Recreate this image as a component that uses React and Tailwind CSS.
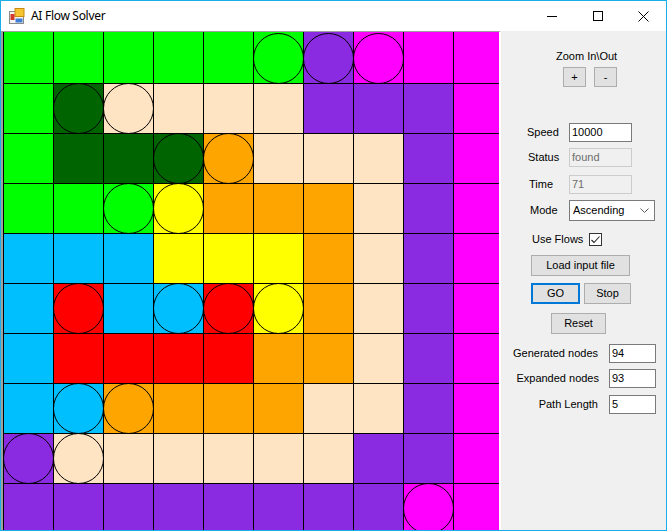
const COLORS = {
  G: 'bg-[#00ff00]',
  D: 'bg-[#006400]',
  B: 'bg-[#ffe4c4]',
  O: 'bg-[#ffa500]',
  Y: 'bg-[#ffff00]',
  C: 'bg-[#00bfff]',
  R: 'bg-[#ff0000]',
  P: 'bg-[#8a2be2]',
  M: 'bg-[#ff00ff]',
};

// lowercase letter = cell holds a flow endpoint (circle)
const BOARD = [
  'GGGGGgpmMM',
  'GdbBBBPPPM',
  'GDDdoBBBPM',
  'GGgyOOOBPM',
  'CCCYYYOBPM',
  'CrCcryOBPM',
  'CRRRROOBPM',
  'CcoOOOBBPM',
  'pbBBBBBPPM',
  'PPPPPPPPmM',
];

function Cell({ code, first }) {
  const color = COLORS[code.toUpperCase()];
  const dot = code !== code.toUpperCase();
  return (
    <div
      className={`relative w-[50px] shrink-0 border-l border-black ${color} ${
        first ? 'h-[51px]' : 'h-[50px] border-t'
      }`}
    >
      {dot && (
        <div
          className={`absolute left-[-1px] w-[51px] h-[51px] rounded-full border border-black ${
            first ? 'top-[1px]' : 'top-[-1px]'
          }`}
        />
      )}
    </div>
  );
}

function Board() {
  return (
    <div className="w-[500px] h-full shrink-0 overflow-hidden border-l-2 border-l-[#a0a0a0] border-t border-t-[#a0a0a0] border-r-2 border-r-white">
      {BOARD.map((row, r) => (
        <div key={r} className="flex">
          {row.split('').map((c, i) => (
            <Cell key={i} code={c} first={r === 0} />
          ))}
        </div>
      ))}
    </div>
  );
}

function Btn({ children, className = '' }) {
  return (
    <div
      className={`flex items-center justify-center bg-[#e1e1e1] border border-[#adadad] ${className}`}
    >
      {children}
    </div>
  );
}

function Field({ value, disabled, className = '' }) {
  return (
    <div
      className={`h-[19px] flex items-center pl-[2px] border ${
        disabled
          ? 'bg-[#f0f0f0] border-[#cccccc] text-[#6d6d6d]'
          : 'bg-white border-[#7a7a7a] text-black'
      } ${className}`}
    >
      {value}
    </div>
  );
}

function Controls() {
  return (
    <div className="flex-1 bg-[#f0f0f0] flex flex-col text-[11px] leading-[13px] text-black font-['Liberation_Sans',Arial,sans-serif]">
      <div className="mt-[19px] ml-[55px]">Zoom In\Out</div>
      <div className="mt-[4px] flex">
        <Btn className="ml-[62px] w-[23px] h-[20px]">+</Btn>
        <Btn className="ml-[8px] w-[23px] h-[20px]">-</Btn>
      </div>

      <div className="mt-[36px] flex items-center">
        <span className="ml-[26px] w-[42px]">Speed</span>
        <Field value="10000" className="w-[63px]" />
      </div>
      <div className="mt-[6px] flex items-center">
        <span className="ml-[27px] w-[41px]">Status</span>
        <Field value="found" disabled className="w-[63px]" />
      </div>
      <div className="mt-[8px] flex items-center">
        <span className="ml-[28px] w-[40px]">Time</span>
        <Field value="71" disabled className="w-[63px]" />
      </div>
      <div className="mt-[6px] flex items-center">
        <span className="ml-[29px] w-[39px]">Mode</span>
        <div className="w-[86px] h-[21px] bg-white border border-[#7a7a7a] flex items-center justify-between pl-[3px] pr-[5px]">
          <span>Ascending</span>
          <svg width="9" height="5" viewBox="0 0 9 5">
            <polyline points="0.5,0.5 4.5,4.5 8.5,0.5" fill="none" stroke="#606060" strokeWidth="1" />
          </svg>
        </div>
      </div>
      <div className="mt-[12px] flex items-center h-[13px]">
        <span className="ml-[31px] w-[57px]">Use Flows</span>
        <div className="w-[13px] h-[13px] bg-white border border-[#333333] flex items-center justify-center">
          <svg width="9" height="8" viewBox="0 0 9 8">
            <polyline points="0.5,4 3,6.5 8.5,0.5" fill="none" stroke="#222" strokeWidth="1.1" />
          </svg>
        </div>
      </div>
      <Btn className="mt-[9px] ml-[30px] w-[99px] h-[21px]">Load input file</Btn>
      <div className="mt-[7px] flex">
        <div className="ml-[30px] w-[49px] h-[21px] flex items-center justify-center bg-[#e1e1e1] border-2 border-[#0078d7]">
          GO
        </div>
        <Btn className="ml-[4px] w-[47px] h-[21px]">Stop</Btn>
      </div>
      <Btn className="mt-[9px] ml-[50px] w-[55px] h-[21px]">Reset</Btn>

      <div className="mt-[10px] flex items-center">
        <span className="w-[97px] text-right">Generated nodes</span>
        <Field value="94" className="ml-[11px] w-[47px]" />
      </div>
      <div className="mt-[6px] flex items-center">
        <span className="w-[98px] text-right">Expanded nodes</span>
        <Field value="93" className="ml-[10px] w-[47px]" />
      </div>
      <div className="mt-[7px] flex items-center">
        <span className="w-[97px] text-right">Path Length</span>
        <Field value="5" className="ml-[11px] w-[47px]" />
      </div>
    </div>
  );
}

function AppIcon() {
  return (
    <svg width="16" height="16" viewBox="0 0 16 16">
      <rect x="0.5" y="3.5" width="14" height="12" fill="#f4f4f4" stroke="#8a8a8a" />
      <rect x="6" y="0.5" width="9" height="8" fill="#f6c431" stroke="#c98a12" />
      <rect x="1.5" y="6" width="4" height="6" fill="#d33a2c" />
      <rect x="6.5" y="10.5" width="7" height="4" fill="#3f7fd6" />
    </svg>
  );
}

function TitleBar() {
  return (
    <div className="h-[30px] bg-white flex items-center shrink-0">
      <div className="ml-[8px] mt-[-1px]">
        <AppIcon />
      </div>
      <span className="ml-[6px] text-[12px] tracking-[-0.3px] text-black font-['Noto_Sans',sans-serif]">AI Flow Solver</span>
      <div className="ml-auto flex h-full">
        <div className="w-[46px] flex items-center justify-center">
          <div className="w-[10px] h-px bg-black" />
        </div>
        <div className="w-[46px] flex items-center justify-center">
          <div className="w-[10px] h-[10px] border border-black" />
        </div>
        <div className="w-[45px] flex items-center justify-center">
          <svg width="11" height="11" viewBox="0 0 11 11">
            <path d="M0.5 0.5 L10.5 10.5 M10.5 0.5 L0.5 10.5" stroke="#000" strokeWidth="1" />
          </svg>
        </div>
      </div>
    </div>
  );
}

export default function App() {
  return (
    <div className="w-[667px] h-[531px] border border-[#18aee8] bg-white flex flex-col overflow-hidden">
      <TitleBar />
      <div className="flex flex-1 min-h-0">
        <Board />
        <Controls />
      </div>
    </div>
  );
}
